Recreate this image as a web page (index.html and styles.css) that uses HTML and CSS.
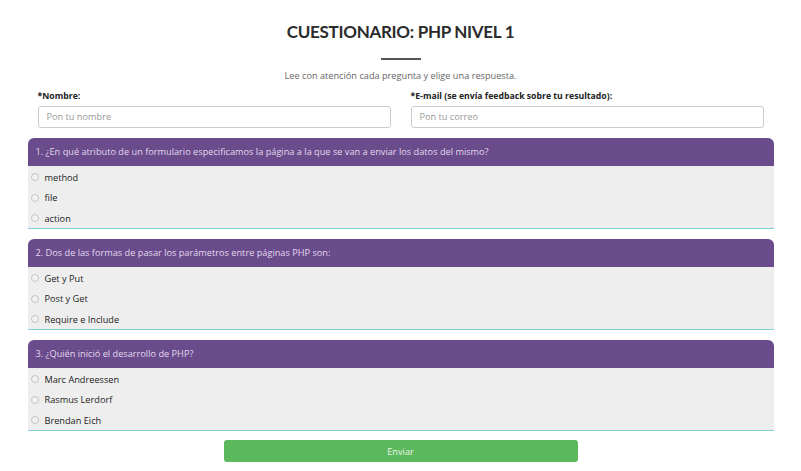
FILE: index.html
```html
<!DOCTYPE html>
<html lang="es">
<head>
<meta charset="utf-8">
<title>Cuestionario PHP</title>
<link rel="stylesheet" href="styles.css">
</head>
<body>
<div class="container">
  <h1 class="title">CUESTIONARIO: PHP NIVEL 1</h1>
  <div class="divider"></div>
  <p class="subtitle">Lee con atención cada pregunta y elige una respuesta.</p>
  <div class="fields">
    <div class="field">
      <label class="label">*Nombre:</label>
      <div class="input">Pon tu nombre</div>
    </div>
    <div class="field">
      <label class="label">*E-mail (se envía feedback sobre tu resultado):</label>
      <div class="input">Pon tu correo</div>
    </div>
  </div>

  <div class="card">
    <div class="card-head">1. ¿En qué atributo de un formulario especificamos la página a la que se van a enviar los datos del mismo?</div>
    <div class="card-body">
      <div class="opt"><span class="radio"></span>method</div>
      <div class="opt"><span class="radio"></span>file</div>
      <div class="opt"><span class="radio"></span>action</div>
    </div>
  </div>

  <div class="card">
    <div class="card-head">2. Dos de las formas de pasar los parámetros entre páginas PHP son:</div>
    <div class="card-body">
      <div class="opt"><span class="radio"></span>Get y Put</div>
      <div class="opt"><span class="radio"></span>Post y Get</div>
      <div class="opt"><span class="radio"></span>Require e Include</div>
    </div>
  </div>

  <div class="card">
    <div class="card-head">3. ¿Quién inició el desarrollo de PHP?</div>
    <div class="card-body">
      <div class="opt"><span class="radio"></span>Marc Andreessen</div>
      <div class="opt"><span class="radio"></span>Rasmus Lerdorf</div>
      <div class="opt"><span class="radio"></span>Brendan Eich</div>
    </div>
  </div>

  <div class="actions">
    <button class="btn">Enviar</button>
  </div>
</div>
</body>
</html>
```
FILE: styles.css
```css
* { box-sizing: border-box; }
html, body { margin: 0; padding: 0; background: #fff; }
body {
  font-family: "Open Sans", "Liberation Sans", sans-serif;
  font-size: 9.2px;
  color: #333;
}
.container {
  width: 746px;
  margin: 0 auto;
  padding-top: 20px;
}
.title {
  margin: 0;
  text-align: center;
  font-family: Lato, "Open Sans", sans-serif;
  font-weight: 700;
  font-size: 17px;
  letter-spacing: -0.3px;
  line-height: 24px;
  color: #2b2b2b;
}
.divider {
  width: 40px;
  height: 2px;
  background: #555;
  margin: 14px auto 0;
}
.subtitle {
  margin: 8px 0 0;
  text-align: center;
  font-size: 9.2px;
  line-height: 16px;
  color: #666;
}
.fields {
  display: flex;
  gap: 20px;
  padding: 0 10px;
  margin-top: 4px;
}
.field { flex: 1; display: flex; flex-direction: column; }
.label {
  font-weight: 700;
  font-size: 8.7px;
  line-height: 16px;
  color: #222;
}
.input {
  margin-top: 2px;
  height: 22px;
  border: 1px solid #ccc;
  border-radius: 3px;
  padding-left: 8px;
  line-height: 20px;
  font-size: 9.2px;
  color: #999;
}
.card { margin-top: 10px; }
.card-head {
  height: 28px;
  line-height: 28px;
  padding-left: 8px;
  background: #6a4b8c;
  color: #e2d9ec;
  border-radius: 6px 6px 0 0;
  font-size: 9.2px;
  white-space: nowrap;
}
.card-body {
  background: #eeeeee;
  border-bottom: 1px solid #7fd1d9;
  padding: 1px 0 0;
}
.opt {
  display: flex;
  align-items: center;
  height: 20px;
  padding-left: 3px;
  font-size: 9.2px;
  color: #222;
}
.opt:nth-child(2) { height: 21px; }
.radio {
  width: 8px;
  height: 8px;
  border-radius: 50%;
  border: 1px solid #c4c4c4;
  background: #f2f2f2;
  margin-right: 6px;
}
.actions {
  display: flex;
  justify-content: center;
  margin-top: 9px;
}
.btn {
  width: 354px;
  height: 22px;
  border: none;
  border-radius: 3px;
  background: #5cb85c;
  color: #eaf6ea;
  font-family: "Open Sans", sans-serif;
  font-size: 9.2px;
  padding: 0;
}
```
